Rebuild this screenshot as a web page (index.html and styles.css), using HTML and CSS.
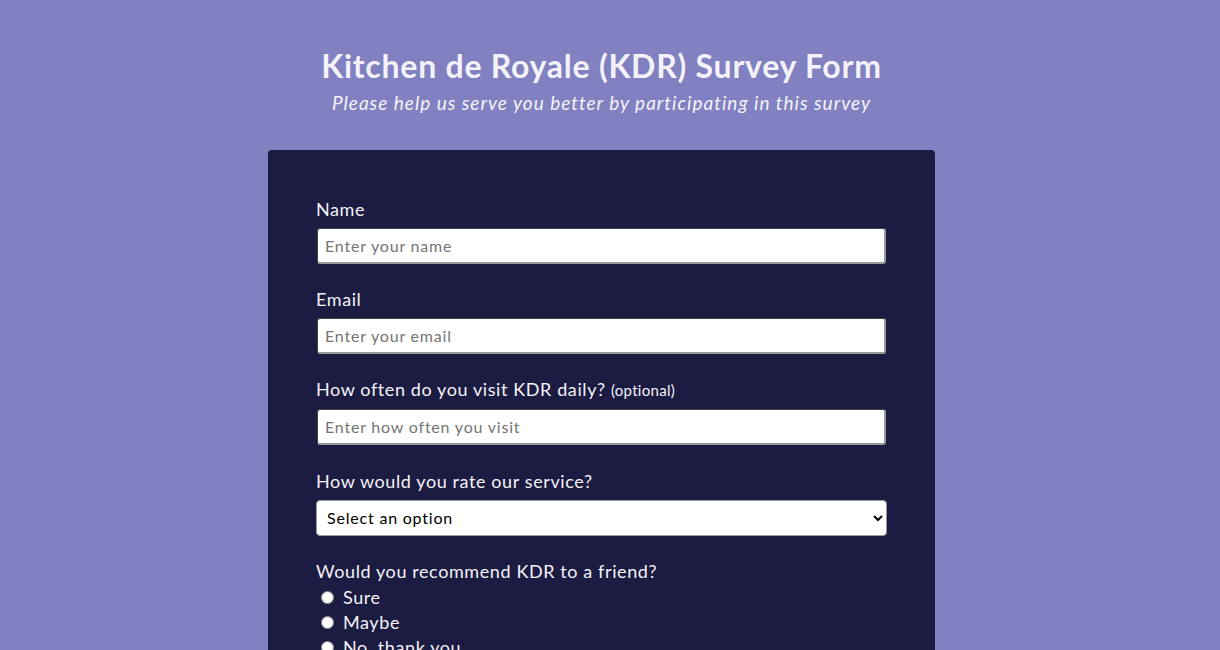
FILE: index.html
```html
<!DOCTYPE html>
<html lang="en">
<head>
<meta charset="utf-8">
<title>Kitchen de Royale (KDR) Survey Form</title>
<link rel="stylesheet" href="styles.css">
</head>
<body>
<header class="header">
  <h1 class="title">Kitchen de Royale (KDR) Survey Form</h1>
  <p class="subtitle">Please help us serve you better by participating in this survey</p>
</header>
<form class="card">
  <div class="group">
    <label class="label" for="name">Name</label>
    <input class="field" id="name" type="text" placeholder="Enter your name">
  </div>
  <div class="group">
    <label class="label" for="email">Email</label>
    <input class="field" id="email" type="email" placeholder="Enter your email">
  </div>
  <div class="group">
    <label class="label" for="visit">How often do you visit KDR daily? <span class="opt">(optional)</span></label>
    <input class="field" id="visit" type="number" placeholder="Enter how often you visit">
  </div>
  <div class="group">
    <label class="label" for="rate">How would you rate our service?</label>
    <select class="select" id="rate">
      <option>Select an option</option>
      <option>Excellent</option>
      <option>Good</option>
      <option>Poor</option>
    </select>
  </div>
  <div class="group">
    <p class="label label-plain">Would you recommend KDR to a friend?</p>
    <label class="radio"><input type="radio" name="rec"> Sure</label>
    <label class="radio"><input type="radio" name="rec"> Maybe</label>
    <label class="radio"><input type="radio" name="rec"> No, thank you</label>
  </div>
</form>
</body>
</html>
```

FILE: styles.css
```css
html, body {
  margin: 0;
  padding: 0;
}
body {
  background: #8180c0;
  color: #f3f2f8;
  font-family: "Lato", "DejaVu Sans", sans-serif;
  padding-right: 17px;
}
.header {
  text-align: center;
  padding-top: 47px;
}
.title {
  margin: 0;
  font-size: 32px;
  line-height: 37px;
  font-weight: 700;
  letter-spacing: 0.75px;
}
.subtitle {
  margin: 8px 0 0;
  font-size: 19px;
  line-height: 22px;
  font-style: italic;
  letter-spacing: 1px;
}
.card {
  width: 667px;
  box-sizing: border-box;
  margin: 36px auto 0;
  background: #1c1b41;
  border-radius: 4px;
  padding: 48px 48px 40px;
}
.group {
  margin-bottom: 24.2px;
}
.label {
  display: block;
  margin: 0 0 8px;
  font-size: 18px;
  line-height: 22px;
  letter-spacing: 0.6px;
}
.label-plain {
  margin-bottom: 3px;
}
.opt {
  font-size: 15px;
  letter-spacing: 0.3px;
}
.field {
  display: block;
  box-sizing: border-box;
  width: 569px;
  height: 36px;
  margin-left: 1px;
  padding: 0 7px;
  font-family: inherit;
  font-size: 16px;
  letter-spacing: 0.8px;
  color: #222;
  background: #fff;
  border: 1px solid #777;
  border-top-color: #444;
  border-left-color: #444;
  border-right: 2px solid #999;
  border-bottom: 2px solid #999;
  border-radius: 3px;
}
.field::placeholder {
  color: #757575;
}
.select {
  display: block;
  box-sizing: border-box;
  width: 571px;
  height: 36px;
  padding: 0 6px;
  font-family: inherit;
  font-size: 16px;
  letter-spacing: 0.8px;
  color: #000;
  background: #fff;
  border: 1px solid #999;
  border-radius: 4px;
}
.radio {
  display: flex;
  align-items: center;
  gap: 9px;
  font-size: 18px;
  line-height: 25px;
  letter-spacing: 0.6px;
  padding-left: 5px;
}
.radio input {
  margin: 0;
  width: 13px;
  height: 13px;
}
```
